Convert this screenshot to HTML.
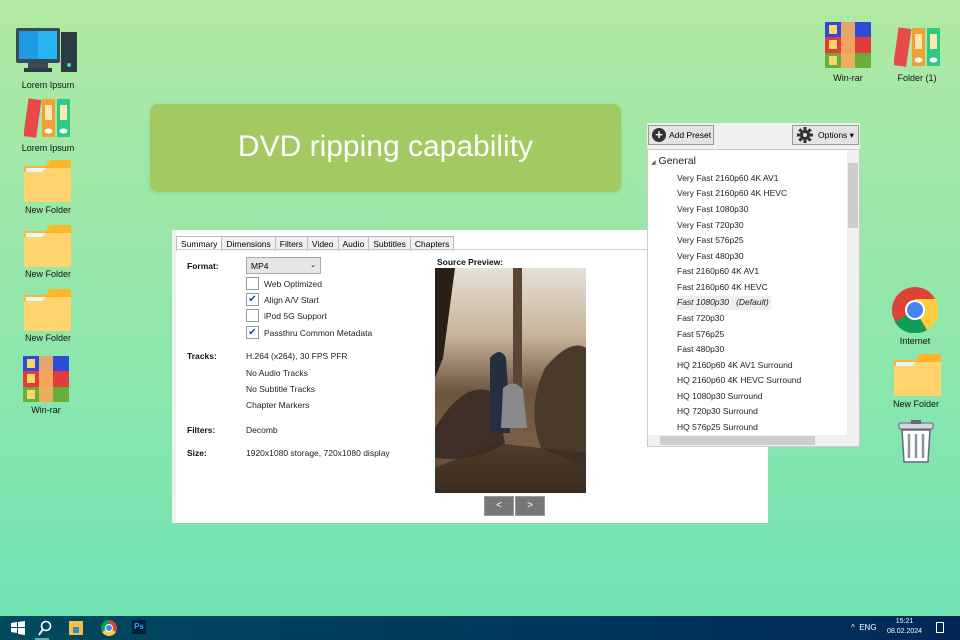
<!DOCTYPE html>
<html><head><meta charset="utf-8"><style>
*{margin:0;padding:0;box-sizing:border-box}
body{width:960px;height:640px;overflow:hidden;position:relative;font-family:"Liberation Sans",sans-serif;background:linear-gradient(#b1e9a3,#8ee6ac 55%,#70e3b4 96%)}
.a{position:absolute}
.lbl{position:absolute;font-size:9px;color:#111;text-align:center;width:80px}
.t{position:absolute;font-size:8.5px;color:#222}
.b{position:absolute;font-size:8.5px;font-weight:bold;color:#111}
.cb{position:absolute;width:13px;height:13px;border:1px solid #999;background:#fff;font-size:10px;color:#1a4a9a;line-height:11px;text-align:center}
.tab{display:inline-block;border:1px solid #bbb;border-bottom:none;padding:2px 4px;font-size:8.5px;background:#f0f0f0;margin-right:-1px}
.pr{position:absolute;left:677px;font-size:8.5px;color:#222}
</style></head><body>
<svg class="a" style="left:16px;top:27px" width="62" height="50"><rect x="0" y="1" width="44" height="35" rx="2" fill="#3a4a55"/><rect x="3" y="4" width="38" height="28" fill="#1f9be4"/><rect x="22" y="4" width="19" height="28" fill="#25b6f0"/><rect x="12" y="36" width="20" height="5" fill="#3a4a55"/><rect x="8" y="41" width="28" height="4" fill="#2d3b44"/><rect x="45" y="5" width="16" height="40" fill="#2d3b44"/><circle cx="53" cy="38" r="2" fill="#3ee0a0"/></svg>
<div class="lbl" style="left:8px;top:80px">Lorem Ipsum</div>
<svg class="a" style="left:24px;top:97px" width="48" height="42"><rect x="2" y="2" width="13" height="38" fill="#e84a4a" transform="rotate(8 8 20)"/><rect x="18" y="2" width="13" height="38" fill="#f3a033"/><rect x="33" y="2" width="13" height="38" fill="#2ec983"/><rect x="21" y="8" width="7" height="15" fill="#fde8b0"/><rect x="36" y="8" width="7" height="15" fill="#fde8b0"/><ellipse cx="24.5" cy="34" rx="4" ry="2.5" fill="#fff"/><ellipse cx="39.5" cy="34" rx="4" ry="2.5" fill="#fff"/></svg>
<div class="lbl" style="left:8px;top:143px">Lorem Ipsum</div>
<svg class="a" style="left:23px;top:160px" width="48" height="42"><path d="M1 6h22l4-6h19a2 2 0 0 1 2 2v38H1z" fill="#fdb52a"/><rect x="3" y="8" width="42" height="6" fill="#e8f6fb"/><path d="M1 12h18l4-4h25v32a2 2 0 0 1-2 2H1z" fill="#ffd46e"/></svg>
<div class="lbl" style="left:8px;top:205px">New Folder</div>
<svg class="a" style="left:23px;top:225px" width="48" height="42"><path d="M1 6h22l4-6h19a2 2 0 0 1 2 2v38H1z" fill="#fdb52a"/><rect x="3" y="8" width="42" height="6" fill="#e8f6fb"/><path d="M1 12h18l4-4h25v32a2 2 0 0 1-2 2H1z" fill="#ffd46e"/></svg>
<div class="lbl" style="left:8px;top:269px">New Folder</div>
<svg class="a" style="left:23px;top:289px" width="48" height="42"><path d="M1 6h22l4-6h19a2 2 0 0 1 2 2v38H1z" fill="#fdb52a"/><rect x="3" y="8" width="42" height="6" fill="#e8f6fb"/><path d="M1 12h18l4-4h25v32a2 2 0 0 1-2 2H1z" fill="#ffd46e"/></svg>
<div class="lbl" style="left:8px;top:333px">New Folder</div>
<svg class="a" style="left:23px;top:356px" width="46" height="46"><rect width="46" height="15" fill="#2c4bd6"/><rect y="15" width="46" height="16" fill="#e23b3b"/><rect y="31" width="46" height="15" fill="#6aae3a"/><rect x="16" width="14" height="46" fill="#f7b060" opacity=".9"/><rect x="4" y="3" width="8" height="9" fill="#fcd566"/><rect x="4" y="18" width="8" height="9" fill="#fcd566"/><rect x="4" y="34" width="8" height="9" fill="#fcd566"/></svg>
<div class="lbl" style="left:6px;top:405px">Win-rar</div>
<svg class="a" style="left:825px;top:22px" width="46" height="46"><rect width="46" height="15" fill="#2c4bd6"/><rect y="15" width="46" height="16" fill="#e23b3b"/><rect y="31" width="46" height="15" fill="#6aae3a"/><rect x="16" width="14" height="46" fill="#f7b060" opacity=".9"/><rect x="4" y="3" width="8" height="9" fill="#fcd566"/><rect x="4" y="18" width="8" height="9" fill="#fcd566"/><rect x="4" y="34" width="8" height="9" fill="#fcd566"/></svg>
<div class="lbl" style="left:808px;top:73px">Win-rar</div>
<svg class="a" style="left:894px;top:26px" width="48" height="42"><rect x="2" y="2" width="13" height="38" fill="#e84a4a" transform="rotate(8 8 20)"/><rect x="18" y="2" width="13" height="38" fill="#f3a033"/><rect x="33" y="2" width="13" height="38" fill="#2ec983"/><rect x="21" y="8" width="7" height="15" fill="#fde8b0"/><rect x="36" y="8" width="7" height="15" fill="#fde8b0"/><ellipse cx="24.5" cy="34" rx="4" ry="2.5" fill="#fff"/><ellipse cx="39.5" cy="34" rx="4" ry="2.5" fill="#fff"/></svg>
<div class="lbl" style="left:877px;top:73px">Folder (1)</div>
<svg class="a" style="left:892px;top:287px" width="46" height="46"><circle cx="23" cy="23" r="23" fill="#db4437"/><path d="M23 23 L3 35 A23 23 0 0 0 35 43z" fill="#0f9d58"/><path d="M23 23 L35 43 A23 23 0 0 0 44 12 L23 12z" fill="#ffcd40"/><circle cx="23" cy="23" r="10" fill="#fff"/><circle cx="23" cy="23" r="8" fill="#4285f4"/></svg>
<div class="lbl" style="left:875px;top:336px">Internet</div>
<svg class="a" style="left:893px;top:354px" width="48" height="42"><path d="M1 6h22l4-6h19a2 2 0 0 1 2 2v38H1z" fill="#fdb52a"/><rect x="3" y="8" width="42" height="6" fill="#e8f6fb"/><path d="M1 12h18l4-4h25v32a2 2 0 0 1-2 2H1z" fill="#ffd46e"/></svg>
<div class="lbl" style="left:876px;top:399px">New Folder</div>
<svg class="a" style="left:897px;top:420px" width="38" height="44"><rect x="2" y="3" width="34" height="6" rx="1" fill="#cfd6dc" stroke="#667" /><rect x="14" y="0" width="10" height="4" fill="#667"/><path d="M5 10h28l-2 32H7z" fill="#fff" stroke="#667" stroke-width="1.5"/><path d="M12 14v24M19 14v24M26 14v24" stroke="#8a96a0" stroke-width="2.5"/></svg>
<div class="a" style="left:150px;top:104px;width:471px;height:88px;background:#a3c962;border-radius:8px;color:#fff;font-size:30px;line-height:86px;text-align:center;box-shadow:0 1px 4px rgba(0,0,0,.1)">DVD ripping capability</div>
<div class="a" style="left:172px;top:230px;width:596px;height:293px;background:#fff;border-left:4px solid #f0f0f0"></div>
<div class="a" style="left:176px;top:234px;white-space:nowrap"><span class="tab" style="background:#fff">Summary</span><span class="tab">Dimensions</span><span class="tab">Filters</span><span class="tab">Video</span><span class="tab">Audio</span><span class="tab">Subtitles</span><span class="tab">Chapters</span></div>
<div class="a" style="left:176px;top:249px;width:592px;height:1px;background:#ccc"></div>
<div class="b" style="left:187px;top:261px">Format:</div>
<div class="a" style="left:246px;top:257px;width:75px;height:17px;border:1px solid #aaa;background:#e6e6e6;font-size:8.5px;padding:3px 4px">MP4<span style="float:right;font-size:7px">⌄</span></div>
<div class="cb" style="left:246px;top:277px"></div><div class="t" style="left:264px;top:279px">Web Optimized</div>
<div class="cb" style="left:246px;top:293px">✔</div><div class="t" style="left:264px;top:295px">Align A/V Start</div>
<div class="cb" style="left:246px;top:309px"></div><div class="t" style="left:264px;top:311px">iPod 5G Support</div>
<div class="cb" style="left:246px;top:326px">✔</div><div class="t" style="left:264px;top:328px">Passthru Common Metadata</div>
<div class="b" style="left:187px;top:351px">Tracks:</div>
<div class="t" style="left:246px;top:351px">H.264 (x264), 30 FPS PFR</div>
<div class="t" style="left:246px;top:368px">No Audio Tracks</div>
<div class="t" style="left:246px;top:384px">No Subtitle Tracks</div>
<div class="t" style="left:246px;top:400px">Chapter Markers</div>
<div class="b" style="left:187px;top:425px">Filters:</div><div class="t" style="left:246px;top:425px">Decomb</div>
<div class="b" style="left:187px;top:448px">Size:</div><div class="t" style="left:246px;top:448px">1920x1080 storage, 720x1080 display</div>
<div class="b" style="left:437px;top:257px">Source Preview:</div>
<svg class="a" style="left:435px;top:268px" width="151" height="225">
<defs><linearGradient id="g" x1="0" y1="0" x2="0" y2="1"><stop offset="0" stop-color="#e6e0d8"/><stop offset=".3" stop-color="#c6b49a"/><stop offset=".55" stop-color="#6d5640"/><stop offset=".8" stop-color="#7a6047"/><stop offset="1" stop-color="#3a2e22"/></linearGradient></defs>
<rect width="151" height="225" fill="url(#g)"/>
<path d="M0 0h20L8 90 0 110z" fill="#2a2018"/>
<path d="M110 100q25-30 41-20v120l-45-20q-15-40 4-80z" fill="#4a3a2c"/>
<path d="M0 160q30-50 60-35l10 50q-30 20-70 15z" fill="#3e3026"/>
<rect x="78" y="0" width="9" height="150" fill="#5a4636"/>
<path d="M55 90q10-12 16 0l4 60v15h-20z" fill="#243040"/>
<path d="M68 120q12-10 20 2l4 38h-26z" fill="#8a8a8a"/>
<path d="M0 200l60-25 91 10v40H0z" fill="#3a2c20" opacity=".7"/>
</svg>
<div class="a" style="left:484px;top:496px;width:30px;height:20px;background:#777;border:1px solid #999;color:#fff;font-size:10px;text-align:center;line-height:18px">&lt;</div>
<div class="a" style="left:515px;top:496px;width:30px;height:20px;background:#777;border:1px solid #999;color:#fff;font-size:10px;text-align:center;line-height:18px">&gt;</div>
<div class="a" style="left:647px;top:123px;width:213px;height:324px;background:#f0f0f0"></div>
<div class="a" style="left:648px;top:125px;width:66px;height:20px;border:1px solid #999;background:#e4e4e4;font-size:8.5px;line-height:18px;padding-left:20px">Add Preset</div>
<div class="a" style="left:652px;top:128px;width:14px;height:14px;border-radius:50%;background:#333;color:#fff;font-size:13px;line-height:13px;text-align:center;font-weight:bold">+</div>
<div class="a" style="left:792px;top:125px;width:67px;height:20px;border:1px solid #999;background:#e4e4e4;font-size:8.5px;line-height:18px;padding-left:25px">Options ▾</div>
<svg class="a" style="left:797px;top:127px" width="16" height="16"><circle cx="8" cy="8" r="5" fill="#333"/><path d="M8 0v16M0 8h16M2.3 2.3l11.4 11.4M13.7 2.3L2.3 13.7" stroke="#333" stroke-width="3"/><circle cx="8" cy="8" r="2" fill="#e4e4e4"/></svg>
<div class="a" style="left:647px;top:149px;width:213px;height:298px;background:#fff;border:1px solid #ccc"></div>
<div class="a" style="left:651px;top:155px;font-size:10.5px;color:#222"><span style="font-size:6px;color:#555">◢</span> General</div>
<div class="a" style="left:676px;top:296px;width:95px;height:14px;background:#eee"></div>
<div class="pr" style="top:173px">Very Fast 2160p60 4K AV1</div>
<div class="pr" style="top:188px">Very Fast 2160p60 4K HEVC</div>
<div class="pr" style="top:204px">Very Fast 1080p30</div>
<div class="pr" style="top:220px">Very Fast 720p30</div>
<div class="pr" style="top:235px">Very Fast 576p25</div>
<div class="pr" style="top:251px">Very Fast 480p30</div>
<div class="pr" style="top:266px">Fast 2160p60 4K AV1</div>
<div class="pr" style="top:282px">Fast 2160p60 4K HEVC</div>
<div class="pr" style="top:297px;font-style:italic">Fast 1080p30 &nbsp;&nbsp;(Default)</div>
<div class="pr" style="top:313px">Fast 720p30</div>
<div class="pr" style="top:329px">Fast 576p25</div>
<div class="pr" style="top:344px">Fast 480p30</div>
<div class="pr" style="top:360px">HQ 2160p60 4K AV1 Surround</div>
<div class="pr" style="top:375px">HQ 2160p60 4K HEVC Surround</div>
<div class="pr" style="top:391px">HQ 1080p30 Surround</div>
<div class="pr" style="top:406px">HQ 720p30 Surround</div>
<div class="pr" style="top:422px">HQ 576p25 Surround</div>
<div class="a" style="left:847px;top:150px;width:12px;height:285px;background:#f0f0f0"></div>
<div class="a" style="left:848px;top:163px;width:10px;height:65px;background:#cdcdcd"></div>
<div class="a" style="left:648px;top:435px;width:211px;height:11px;background:#f0f0f0"></div>
<div class="a" style="left:660px;top:436px;width:155px;height:9px;background:#cdcdcd"></div>
<div class="a" style="left:0;top:616px;width:960px;height:24px;background:linear-gradient(90deg,#004a5e,#003a5c 50%,#022858)"></div>
<svg class="a" style="left:11px;top:621px" width="14" height="14"><path d="M0 2l6-1v5H0zM7 1l7-1v6H7zM0 7h6v5l-6-1zM7 7h7v7l-7-1z" fill="#fff"/></svg>
<svg class="a" style="left:37px;top:620px" width="16" height="16"><circle cx="9" cy="6" r="4.5" stroke="#fff" stroke-width="1.6" fill="none"/><path d="M6 9l-4 6" stroke="#fff" stroke-width="1.8"/></svg>
<div class="a" style="left:69px;top:621px;width:14px;height:14px;background:#f5c042"><div style="margin:6px 4px 0;width:6px;height:6px;background:#2f8ed8"></div></div>
<div class="a" style="left:35px;top:638px;width:14px;height:2px;background:#6ab"></div>
<div class="a" style="left:101px;top:620px;width:16px;height:16px;border-radius:50%;background:conic-gradient(#db4437 0 120deg,#ffcd40 0 240deg,#0f9d58 0)"><div style="margin:4px;width:8px;height:8px;border-radius:50%;background:#4285f4;border:1.5px solid #fff"></div></div>
<div class="a" style="left:132px;top:620px;width:14px;height:14px;background:#001e36;color:#31a8ff;font-size:8px;font-weight:bold;text-align:center;line-height:14px">Ps</div>
<div class="a" style="left:851px;top:623px;color:#fff;font-size:8px">^ &nbsp;ENG</div>
<div class="a" style="left:887px;top:617px;color:#fff;font-size:7px;text-align:center;line-height:10px">15:21<br>08.02.2024</div>
<div class="a" style="left:936px;top:622px;width:8px;height:11px;border:1px solid #fff"></div>
</body></html>
